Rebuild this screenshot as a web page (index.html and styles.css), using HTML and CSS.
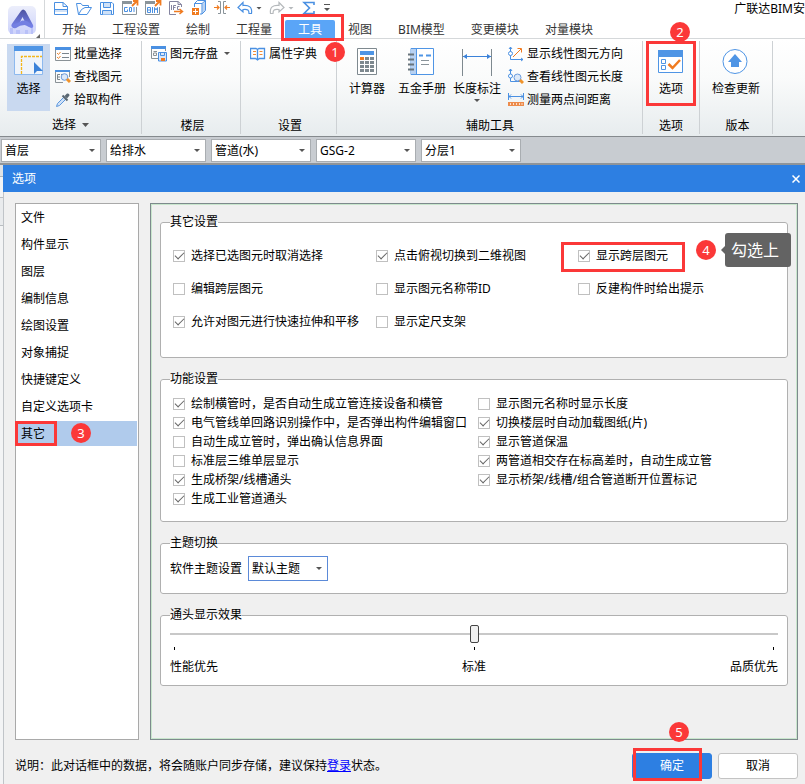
FILE: index.html
```html
<!DOCTYPE html>
<html lang="zh-CN">
<head>
<meta charset="utf-8">
<title>广联达BIM安装计量</title>
<link rel="stylesheet" href="styles.css">
</head>
<body>
<header class="header">
  <button class="logo" aria-label="应用菜单">
    <svg width="28" height="28" viewBox="0 0 28 28">
      <defs>
        <linearGradient id="lg" x1="0" y1="0" x2="0" y2="1"><stop offset="0" stop-color="#eceefb"/><stop offset="1" stop-color="#ccd2fb"/></linearGradient>
        <linearGradient id="la" x1="0" y1="0" x2="0" y2="1"><stop offset="0" stop-color="#4d53a0"/><stop offset="1" stop-color="#7a86f0"/></linearGradient>
      </defs>
      <rect width="28" height="28" rx="5" fill="url(#lg)"/>
      <path d="M2 28v-6h3v6zM8 28v-4h4v4zM17 28v-4h3v4zM23 28v-7h2v7z" fill="#b9c1f8"/>
      <path d="M13 5Q15 2 17.500 5L25 19Q26 22 23 22L19 20L14.500 11L10 20Q7 23.500 4 21Q2.500 19.500 4.500 17Z" fill="url(#la)"/>
      <path d="M5 18.500Q11 17 14 14.500Q19 14 22 17.500L24 21.500Q20 20 16.500 19Q12 19 8 22Q3 23 5 18.500Z" fill="#7480e2"/>
    </svg>
    <svg class="logo-corner" width="4" height="4" viewBox="0 0 4 4"><path d="M4 0v4H0z" fill="#666"/></svg>
  </button>
  <div class="header-main">
    <div class="quickbar">
      <button aria-label="新建"><svg width="16" height="16" viewBox="0 0 16 16" fill="none" stroke="#4a90e2"><path d="M1.500 14.500V2.500H10L14.500 6.500V14.500ZM10 2.500V6.500H14.500"/><path d="M2 10h12v2H2z" fill="#cfe1f7" stroke="none"/><path d="M1.500 9.500H14.500"/></svg></button>
      <button aria-label="打开"><svg width="16" height="16" viewBox="0 0 16 16" fill="none" stroke="#4a90e2"><path d="M2.500 14.500L.500 3.500H5L6.500 5.500H12.500V7.500M2.500 14.500L5.500 9.500L9 7.500H15.500L11 14.500Z"/></svg></button>
      <button aria-label="保存"><svg width="16" height="16" viewBox="0 0 16 16" fill="none" stroke="#4a90e2"><path d="M1.500 2.500H13L14.500 4V14.500H1.500Z"/><path d="M4.500 2.500H11.500V7.500H4.500ZM3.500 14.500V10.500H12.500V14.500" fill="#cfe1f7"/></svg></button>
      <button aria-label="导出GQI"><svg width="17" height="16" viewBox="0 0 17 16" fill="none"><path d="M.500 1.500V14.500H14.500V7" stroke="#8a949a"/><path d="M0 1h10v3H0z" fill="#8a949a"/><path d="M5.500 7.500H2.500V11.500H5.500V9.500M7.500 7.500H9.500V11.500H7.500ZM12 7V12" stroke="#4a90e2"/><path d="M10 6L15 1M11 1H15.500V5.500" stroke="#f07b20" stroke-width="1.800"/></svg></button>
      <button aria-label="导出BIM"><svg width="17" height="16" viewBox="0 0 17 16" fill="none"><path d="M.500 1.500V14.500H14.500V7" stroke="#8a949a"/><path d="M0 1h10v3H0z" fill="#8a949a"/><path d="M2.500 7.500H5.500V12.500H2.500ZM2.500 10H5.500M7.500 7V13M9.500 13V7.500L11 10L12.500 7.500V13" stroke="#4a90e2"/><path d="M10 6L15 1M11 1H15.500V5.500" stroke="#f07b20" stroke-width="1.800"/></svg></button>
      <button aria-label="导出IFC"><svg width="16" height="16" viewBox="0 0 16 16" fill="none" stroke="#8484a0"><path d="M8 14.500H1.500V1.500H10L13.500 4.500V7M10 1.500V4.500H13.500M3.500 5V10M5.500 10V5.500H8M5.500 7.500H7.500M11.500 6.500H9.500V9.500H11.500"/><path d="M6 11.500H14M11.500 9L14.500 11.500L11.500 14" stroke="#f07b20" stroke-width="1.500"/></svg></button>
      <button aria-label="添加模型"><svg width="16" height="16" viewBox="0 0 16 16" fill="none"><path d="M11.500 4L14 1.500V10.500L11.500 13Z" fill="#b9d3f4"/><path d="M3.500 7V3.500L6.500 .500H14.500V10.500L11 14H9M3.500 3.500H11V14M11 3.500L14.500 .500" stroke="#4a90e2"/><path d="M1 8h7v7H1z" fill="#f07b20"/><path d="M4.500 9V14M2 11.500H7" stroke="#fff"/></svg></button>
      <button aria-label="间距"><svg width="16" height="16" viewBox="0 0 16 16" fill="none"><path d="M4 1.500H6.500V13.500H4M12 1.500H9.500V13.500H12" stroke="#8a949a"/><path d="M0 7.500H5M11 7.500H16M3 5.500L5 7.500L3 9.500M13 5.500L11 7.500L13 9.500" stroke="#f07b20" stroke-width="1.200"/></svg></button>
      <button aria-label="撤销"><svg width="16" height="16" viewBox="0 0 16 16" fill="none" stroke="#4a90e2" stroke-width="1.200"><path d="M6 2.500L1 7.500L6 12V9.500C11 9 12 10 12 13.500H14.500C15.500 7 12 5 6 5.500Z"/></svg><i class="caret"></i></button>
      <button aria-label="重做"><svg width="16" height="16" viewBox="0 0 16 16" fill="none" stroke="#b5b9bc" stroke-width="1.200"><path d="M10 2.500L15 7.500L10 12V9.500C5 9 4 10 4 13.500H1.500C.500 7 4 5 10 5.500Z"/></svg><i class="caret caret-off"></i></button>
      <button aria-label="汇总计算"><svg width="16" height="16" viewBox="0 0 16 16" fill="none" stroke="#4a90e2" stroke-width="1.600"><path d="M13 5V2.500H3L8.500 8L3 13.500H13V11"/></svg></button>
      <button aria-label="自定义快速访问栏"><svg width="6" height="8" viewBox="0 0 6 8" fill="#555"><path d="M0 0h6v1H0zM0 4h6L3 7z"/></svg></button>
      <span class="app-title">广联达BIM安</span>
    </div>
    <nav class="tabs">
      <a href="#">开始</a><a href="#">工程设置</a><a href="#">绘制</a><a href="#">工程量</a>
      <a href="#" class="active">工具<span class="mark mark-tab"></span><b class="badge badge-1">1</b></a>
      <a href="#">视图</a><a href="#">BIM模型</a><a href="#">变更模块</a><a href="#">对量模块</a>
    </nav>
  </div>
</header>

<section class="ribbon">
  <div class="group g-select">
    <div class="tools">
      <button class="big pressed"><svg width="30" height="30" viewBox="0 0 30 30" fill="none"><path d="M.500 .500H28.500V28.500H.500Z" fill="#eff4fb" stroke="#8db9ee"/><path d="M0 0H29V5H0Z" fill="#4f95e5"/><path d="M7.500 28V10.500H28" stroke="#f3b71d" stroke-width="1.300" stroke-dasharray="3 1"/><path d="M20 16V28L23 25H29Z" fill="#3b82d9"/></svg>选择</button>
      <div class="stack">
        <button class="small"><svg width="16" height="16" viewBox="0 0 16 16" fill="none"><path d="M.500 2.500H15.500V14.500H.500Z" stroke="#8a9297"/><path d="M0 1H16V4H0Z" fill="#4a90e2"/><path d="M7 7.500H14M7 11.500H14" stroke="#7b858c"/><path d="M2 7L3.500 8.500L5.500 6M2 11L3.500 12.500L5.500 10" stroke="#f08a35"/></svg>批量选择</button>
        <button class="small"><svg width="16" height="16" viewBox="0 0 16 16" fill="none"><path d="M8 13.500H.500V1.500H14.500V8" stroke="#8a9297"/><path d="M0 1H15V3H0Z" fill="#4a90e2"/><path d="M5 5.500H2.500V10.500H5M2.500 8H5M6 5.500H8" stroke="#7b858c"/><circle cx="9.500" cy="8" r="3.300" fill="#dce9f9" stroke="#6a9bdd"/><path d="M12 10L15 13" stroke="#f0932a" stroke-width="3"/></svg>查找图元</button>
        <button class="small"><svg width="16" height="16" viewBox="0 0 16 16" fill="none"><path d="M9 5L2.500 11.500L1.500 14.500L4.500 13.500L11 7" fill="#cfe1f7" stroke="#5b97de"/><path d="M7.500 3.500L12.500 8.500" stroke="#5a6772" stroke-width="2"/><path d="M9.500 4L12 1.500Q14.500 1 14.500 3.500L12 6.500Z" fill="#5a6772"/></svg>拾取构件</button>
      </div>
    </div>
    <div class="group-name">选择<i class="caret"></i></div>
  </div>
  <div class="group g-floor">
    <div class="tools"><button class="small"><svg width="16" height="16" viewBox="0 0 16 16" fill="none"><path d="M7 12.500H.500V.500H14.500V5M2.500 5.500H6M2.500 9.500H5.500V7H2.500Z" stroke="#8a9297"/><path d="M0 0H15V3H0Z" fill="#4a90e2"/><path d="M7.500 6.500H15.500V15H7.500Z" fill="#d7e6fa" stroke="#4a90e2"/><path d="M9.500 7V9.500H13.500V7" stroke="#4a90e2"/><path d="M10 12h4v3h-4z" fill="#f07b20"/></svg>图元存盘<i class="caret"></i></button></div>
    <div class="group-name">楼层</div>
  </div>
  <div class="group g-setup">
    <div class="tools"><button class="small"><svg width="16" height="16" viewBox="0 0 16 16" fill="none"><path d="M7.500 3.500V13.500M.500 2.500H6L7.500 3.500L9 2.500H14.500V12.500H9.500L7.500 14L5.500 12.500H.500Z" stroke="#4a90e2" stroke-width="1.300"/><path d="M3 5.500H6M3 8.500H6M9.500 5.500H12.500M9.500 8.500H12.500" stroke="#f08a35"/></svg>属性字典</button></div>
    <div class="group-name">设置</div>
  </div>
  <div class="group g-aux">
    <div class="tools">
      <button class="big"><svg width="30" height="30" viewBox="0 0 30 30" fill="none"><path d="M5.500 2.500H24.500V28.500H5.500Z" fill="#fff" stroke="#7e898f"/><path d="M8 5h14v4H8z" fill="#4f95e5"/><path d="M8 12.500H22M8 16.500H22M8 20.500H22M8 24.500H22" stroke="#7e898f" stroke-width="3" stroke-dasharray="4 1"/><path d="M8 11h4v3H8z" fill="#f07b20"/></svg>计算器</button>
      <button class="big"><svg width="30" height="30" viewBox="0 0 30 30" fill="none"><path d="M4 2.500H26.500V28.500H4Z" fill="#fff" stroke="#4f95e5"/><path d="M4 3h5v25H4z" fill="#b7d1f2"/><path d="M9.500 3V28" stroke="#4f95e5"/><path d="M1 8.500H7M1 13.500H7M1 18.500H7M1 23.500H7" stroke="#68747c" stroke-width="2"/><path d="M12 9.500H16M19 9.500H24" stroke="#4f95e5" stroke-width="2"/><path d="M14 14.500H22M14 18.500H22" stroke="#8a949a"/></svg>五金手册</button>
      <button class="big"><svg width="30" height="30" viewBox="0 0 30 30" fill="none"><path d="M.500 3V30M29.500 3V30" stroke="#7e898f"/><path d="M1 10.500H29" stroke="#3b82d9"/><path d="M1 10.500L5 8V13ZM29 10.500L25 8V13Z" fill="#3b82d9"/></svg>长度标注<i class="caret"></i></button>
      <div class="stack">
        <button class="small"><svg width="16" height="16" viewBox="0 0 16 16" fill="none"><path d="M2.500 1V13.500H15M1 3L2.500 1L4 3M13 12L15 13.500L13 15" stroke="#4a90e2"/><circle cx="2.500" cy="7.500" r="2" fill="#fff" stroke="#4a90e2"/><path d="M5 11L13 3M9.500 2.500H13.500V6.500" stroke="#f07b20"/></svg>显示线性图元方向</button>
        <button class="small"><svg width="16" height="16" viewBox="0 0 16 16" fill="none"><path d="M2.500 0V12.500H12M1 2L2.500 0L4 2" stroke="#4a90e2"/><circle cx="2.500" cy="7" r="2" fill="#fff" stroke="#4a90e2"/><circle cx="9.500" cy="8.500" r="3.500" fill="#dce9f9" stroke="#6a9bdd"/><path d="M12 11L15 14" stroke="#f0932a" stroke-width="3"/></svg>查看线性图元长度</button>
        <button class="small"><svg width="16" height="16" viewBox="0 0 16 16" fill="none"><path d="M.500 1V8M15.500 1V8M1 4.500H15M3 2.500L1 4.500L3 6.500M13 2.500L15 4.500L13 6.500" stroke="#4a90e2"/><path d="M0 10h16v4H0z" fill="#ed8b4b"/><path d="M2.500 11V13M5.500 11V13M8.500 11V13M11.500 11V13M14 11V13" stroke="#fbe0cd"/></svg>测量两点间距离</button>
      </div>
    </div>
    <div class="group-name">辅助工具</div>
  </div>
  <div class="group g-option">
    <span class="mark mark-option"></span><b class="badge badge-2">2</b>
    <div class="tools"><button class="big"><svg width="30" height="30" viewBox="0 0 30 30" fill="none"><path d="M2.500 4.500H26.500V26.500H2.500Z" fill="#fff" stroke="#4f95e5"/><path d="M2 4h25v7H2z" fill="#4f95e5"/><path d="M5.500 13.500H9.500V17.500H5.500ZM5.500 19.500H9.500V23.500H5.500Z" stroke="#4f95e5"/><path d="M12.500 18L16.500 22L24 14" stroke="#f07b20" stroke-width="2.500"/></svg>选项</button></div>
    <div class="group-name">选项</div>
  </div>
  <div class="group g-version">
    <div class="tools"><button class="big"><svg width="30" height="30" viewBox="0 0 30 30"><circle cx="14" cy="15.500" r="12" fill="#fff" stroke="#4f95e5"/><path d="M14 8L21 16H18V21H10V16H7Z" fill="#4f95e5"/></svg>检查更新</button></div>
    <div class="group-name">版本</div>
  </div>
</section>

<div class="filters">
  <span class="combo"><select aria-label="楼层"><option>首层</option></select><i class="caret"></i></span>
  <span class="combo"><select aria-label="专业"><option>给排水</option></select><i class="caret"></i></span>
  <span class="combo"><select aria-label="构件类型"><option>管道(水)</option></select><i class="caret"></i></span>
  <span class="combo"><select aria-label="构件"><option>GSG-2</option></select><i class="caret"></i></span>
  <span class="combo"><select aria-label="分层"><option>分层1</option></select><i class="caret"></i></span>
</div>

<main class="workspace">
  <section class="dialog" role="dialog" aria-labelledby="dlg-title">
    <div class="titlebar">
      <span id="dlg-title">选项</span>
      <button aria-label="关闭"><svg width="8" height="8" viewBox="0 0 8 8"><path d="M.500 .500L7.500 7.500M7.500 .500L.500 7.500" stroke="#fff" stroke-width="1.500"/></svg></button>
    </div>
    <div class="dialog-body">
      <div class="columns">
        <ul class="pages">
          <li><a href="#">文件</a></li>
          <li><a href="#">构件显示</a></li>
          <li><a href="#">图层</a></li>
          <li><a href="#">编制信息</a></li>
          <li><a href="#">绘图设置</a></li>
          <li><a href="#">对象捕捉</a></li>
          <li><a href="#">快捷键定义</a></li>
          <li><a href="#">自定义选项卡</a></li>
          <li class="current"><a href="#">其它</a><span class="mark mark-page"></span><b class="badge badge-3">3</b></li>
        </ul>
        <div class="panel">
          <fieldset>
            <legend>其它设置</legend>
            <div class="checks three">
              <label><input type="checkbox" checked>选择已选图元时取消选择</label>
              <label><input type="checkbox" checked>点击俯视切换到二维视图</label>
              <div class="spot"><label><input type="checkbox" checked>显示跨层图元</label><span class="mark mark-check"></span><b class="badge badge-4">4</b><span class="tip">勾选上</span></div>
              <label><input type="checkbox">编辑跨层图元</label>
              <label><input type="checkbox">显示图元名称带ID</label>
              <label><input type="checkbox">反建构件时给出提示</label>
              <label><input type="checkbox" checked>允许对图元进行快速拉伸和平移</label>
              <label><input type="checkbox">显示定尺支架</label>
            </div>
          </fieldset>
          <fieldset>
            <legend>功能设置</legend>
            <div class="checks two">
              <label><input type="checkbox" checked>绘制横管时，是否自动生成立管连接设备和横管</label>
              <label><input type="checkbox">显示图元名称时显示长度</label>
              <label><input type="checkbox" checked>电气管线单回路识别操作中，是否弹出构件编辑窗口</label>
              <label><input type="checkbox" checked>切换楼层时自动加载图纸(片)</label>
              <label><input type="checkbox">自动生成立管时，弹出确认信息界面</label>
              <label><input type="checkbox" checked>显示管道保温</label>
              <label><input type="checkbox">标准层三维单层显示</label>
              <label><input type="checkbox" checked>两管道相交存在标高差时，自动生成立管</label>
              <label><input type="checkbox" checked>生成桥架/线槽通头</label>
              <label><input type="checkbox" checked>显示桥架/线槽/组合管道断开位置标记</label>
              <label><input type="checkbox" checked>生成工业管道通头</label>
            </div>
          </fieldset>
          <fieldset>
            <legend>主题切换</legend>
            <div class="theme">
              <label for="theme">软件主题设置</label>
              <span class="combo combo-theme"><select id="theme"><option>默认主题</option></select><i class="caret"></i></span>
            </div>
          </fieldset>
          <fieldset>
            <legend>通头显示效果</legend>
            <div class="quality">
              <input type="range" min="0" max="2" value="1" aria-label="通头显示效果">
              <div class="ticks"><i></i><i></i><i></i></div>
              <div class="scale"><span>性能优先</span><span>标准</span><span>品质优先</span></div>
            </div>
          </fieldset>
        </div>
      </div>
      <footer class="actions">
        <p>说明：此对话框中的数据，将会随账户同步存储，建议保持<a href="#">登录</a>状态。</p>
        <span class="ok-wrap"><button class="btn primary">确定</button><span class="mark mark-ok"></span><b class="badge badge-5">5</b></span>
        <button class="btn">取消</button>
      </footer>
    </div>
  </section>
</main>
</body>
</html>
```

FILE: styles.css
```css
* { box-sizing: border-box; }

body {
  margin: 0;
  min-height: 100vh;
  display: flex;
  flex-direction: column;
  overflow-x: hidden;
  background: #fff;
  color: #000;
  font: 12px/16px "Noto Sans", "Noto Sans CJK SC", sans-serif;
}

button, select, input { font: inherit; color: inherit; margin: 0; }
button { border: 0; padding: 0; background: none; white-space: nowrap; }
svg { display: block; flex: none; }

.caret {
  display: inline-block;
  flex: none;
  width: 6px;
  height: 3px;
  background: #555;
  clip-path: polygon(0 0, 100% 0, 50% 100%);
}
.caret-off { background: #b5b9bc; }

/* Header */
.header { display: flex; border-bottom: 1px solid #d5d8da; }
.logo {
  position: relative;
  flex: none;
  width: 45px;
  padding: 6px 8px 4px;
  border-right: 1px solid #d5d8da;
}
.logo-corner { position: absolute; right: 4px; bottom: 0; }
.header-main { flex: 1; min-width: 0; }
.quickbar { display: flex; gap: 7px; padding-left: 8px; height: 20px; }
.quickbar button { display: flex; align-items: center; gap: 3px; height: 16px; }
.quickbar button > svg[width="17"] { margin-right: -1px; }
.app-title { margin-left: auto; padding-top: 1px; white-space: nowrap; }
.tabs { display: flex; padding-left: 4px; }
.tabs a {
  position: relative;
  height: 18px;
  padding: 0 13px;
  line-height: 20px;
  color: #333;
  text-decoration: none;
  white-space: nowrap;
}
.tabs .active { background: #5aa5f7; color: #fff; border-radius: 2px 2px 0 0; }

/* Ribbon */
.ribbon {
  display: flex;
  height: 98px;
  border-bottom: 1px solid #858a8e;
  background: linear-gradient(#fff, #fafbfb 40%, #e7ecee);
}
.group {
  position: relative;
  flex: none;
  display: flex;
  flex-direction: column;
  margin: 2px 0;
  padding-top: 1px;
  border-right: 1px solid #cdd1d4;
}
.g-select { width: 142px; padding-left: 7px; }
.g-floor { width: 99px; padding-left: 9px; }
.g-setup { width: 96px; padding-left: 9px; }
.g-aux { width: 306px; padding-left: 6px; }
.g-option { width: 57px; }
.g-version { width: 73px; }
.tools { display: flex; gap: 7px; flex: 1; }
.g-select .tools { gap: 5px; }
.g-option .tools, .g-version .tools { justify-content: center; }
.big {
  display: flex;
  flex-direction: column;
  align-items: center;
  min-width: 48px;
  height: 67px;
  margin-top: 2px;
  padding-top: 2px;
}
.big svg { margin-bottom: 5px; }
.big .caret { margin-top: 2px; }
.g-select .big { min-width: 43px; }
.pressed { background: #c9d9f0; }
.small { display: flex; align-items: center; gap: 3px; height: 23px; }
.small .caret { margin-left: 3px; }
.group-name { text-align: center; }
.g-select .group-name { margin-left: -7px; padding-bottom: 1px; }
.g-floor .group-name, .g-setup .group-name { margin-left: -6px; }
.g-aux .group-name { margin-left: -5px; }
.g-version .group-name { margin-left: 3px; }
.group-name .caret { width: 7px; height: 4px; margin: 0 0 2px 6px; }

/* Filter bar */
.filters {
  display: flex;
  gap: 5px;
  padding: 2px 1px 1px;
  background: #c8ccd1;
  border-bottom: 2px solid #8f9499;
}
.combo { position: relative; display: block; width: 100px; height: 23px; }
.combo select {
  appearance: none;
  display: block;
  width: 100%;
  height: 100%;
  padding: 0 3px;
  border: 1px solid #a9adb1;
  border-radius: 0;
  background: #fff;
  outline: 0;
}
.combo .caret { position: absolute; right: 6px; top: 10px; pointer-events: none; }

/* Dialog */
.workspace {
  flex: 1;
  display: flex;
  padding-left: 3px;
  background: linear-gradient(#dfe2e5 0 11px, #aeb3b7 11px 12px, #f3f4f5 12px 32px, #b9bdc1 32px 33px, #e9ebed 33px 60px, #b9bdc1 60px 61px, #f3f4f5 61px);
}
.dialog { flex: 1; display: flex; flex-direction: column; min-width: 0; }
.titlebar {
  display: flex;
  align-items: center;
  justify-content: space-between;
  height: 27px;
  padding: 0 5px 0 9px;
  background: #2d7fe2;
  color: #fff;
}
.dialog-body {
  flex: 1;
  display: flex;
  flex-direction: column;
  padding: 11px 7px 5px 11px;
  border-left: 1px solid #c0c4c8;
  background: #f0f0f0;
}
.columns { flex: 1; display: flex; gap: 11px; }
.pages {
  flex: none;
  width: 124px;
  margin: 0;
  padding: 1px 1px 0 0;
  border: 1px solid #a9a9a9;
  background: #fff;
  list-style: none;
}
.pages li { position: relative; height: 25px; margin-bottom: 2px; }
.pages a { display: block; padding: 0 5px; line-height: 26px; color: #000; text-decoration: none; }
.pages .current { background: #b0cbec; }
.panel {
  flex: 1;
  min-width: 0;
  padding: 10px 9px;
  border: 1px solid #7d8a8c;
  box-shadow: inset 0 0 0 1px #c9e6cd;
}

fieldset {
  min-width: 0;
  margin: 0 0 13px;
  padding: 0 9px;
  border: 1px solid #b0b0b0;
  border-radius: 3px;
  background: #fff;
}
legend { padding: 0; }

.checks { display: grid; padding-left: 3px; }
.checks label { display: flex; align-items: center; gap: 6px; white-space: nowrap; }
.three { grid-template-columns: 203px 202px 1fr; grid-auto-rows: 33px; padding-top: 9px; padding-bottom: 19px; }
.two { grid-template-columns: 305px 1fr; grid-auto-rows: 19px; padding-top: 7px; padding-bottom: 13px; }
.spot { position: relative; display: flex; }

input[type="checkbox"] {
  appearance: none;
  flex: none;
  display: grid;
  place-items: center;
  width: 12px;
  height: 12px;
  border: 1px solid #c0c0c0;
  background: #fff;
}
input[type="checkbox"]:checked::before {
  content: "";
  width: 8px;
  height: 4px;
  margin-bottom: 3px;
  border: solid #666;
  border-width: 0 0 1px 1px;
  transform: rotate(-45deg);
}

.theme { display: flex; align-items: center; gap: 6px; padding: 5px 0 12px; }
.combo-theme { width: 80px; height: 25px; }
.combo-theme select { border-color: #5b8ad8; }
.combo-theme .caret { top: 11px; }

.quality { padding: 2px 0 10px; }
input[type="range"] { appearance: none; display: block; width: 100%; height: 18px; background: none; }
input[type="range"]::-webkit-slider-runnable-track {
  height: 18px;
  background: linear-gradient(#c8c8c8, #c8c8c8) center / 100% 2px no-repeat;
}
input[type="range"]::-webkit-slider-thumb {
  appearance: none;
  width: 9px;
  height: 18px;
  border: 1px solid #444;
  border-radius: 2px;
  background: #f0f0f0;
}
.ticks { display: flex; justify-content: space-between; padding: 4px 4px 9px; }
.ticks i { width: 1px; height: 3px; background: #000; }
.scale { display: flex; justify-content: space-between; }

.actions { display: flex; align-items: center; gap: 6px; padding-top: 13px; }
.actions p { flex: 1; margin: 0; white-space: nowrap; }
.actions a { color: #00f; }
.ok-wrap { position: relative; display: flex; }
.btn {
  width: 80px;
  height: 26px;
  border: 1px solid #c3c3c3;
  border-radius: 3px;
  background: #fff;
}
.btn.primary { border-color: #2d7fe2; background: #2d7fe2; color: #fff; }

/* Step callouts */
.mark { position: absolute; z-index: 1; border: 3px solid #fb3838; pointer-events: none; }
.badge {
  position: absolute;
  z-index: 2;
  width: 20px;
  height: 20px;
  border-radius: 50%;
  background: #fb3838;
  color: #fff;
  font-weight: 400;
  font-size: 13px;
  line-height: 20px;
  text-align: center;
}
.mark-tab { inset: -6px -9px -3px -4px; }
.badge-1 { left: 40px; top: 22px; }
.mark-option { inset: 0 3px auto 3px; height: 65px; }
.badge-2 { left: 27px; top: -19px; }
.mark-page { left: -1px; top: 0; width: 42px; height: 25px; }
.badge-3 { left: 55px; top: 2px; }
.mark-check { left: -17px; top: 3px; width: 124px; height: 30px; }
.badge-4 { left: 118px; top: 1px; }
.badge-5 { left: 37px; top: -31px; }
.mark-ok { left: 1px; top: -5px; width: 69px; height: 33px; }
.tip {
  position: absolute;
  z-index: 2;
  left: 147px;
  top: -6px;
  padding: 0 12px 0 6px;
  border-radius: 3px;
  background: #636363;
  color: #fff;
  font-size: 16px;
  line-height: 34px;
  white-space: nowrap;
}
.tip::before {
  content: "";
  position: absolute;
  left: -4px;
  top: 13px;
  border: solid transparent;
  border-width: 4px 4px 4px 0;
  border-right-color: #636363;
}
```
